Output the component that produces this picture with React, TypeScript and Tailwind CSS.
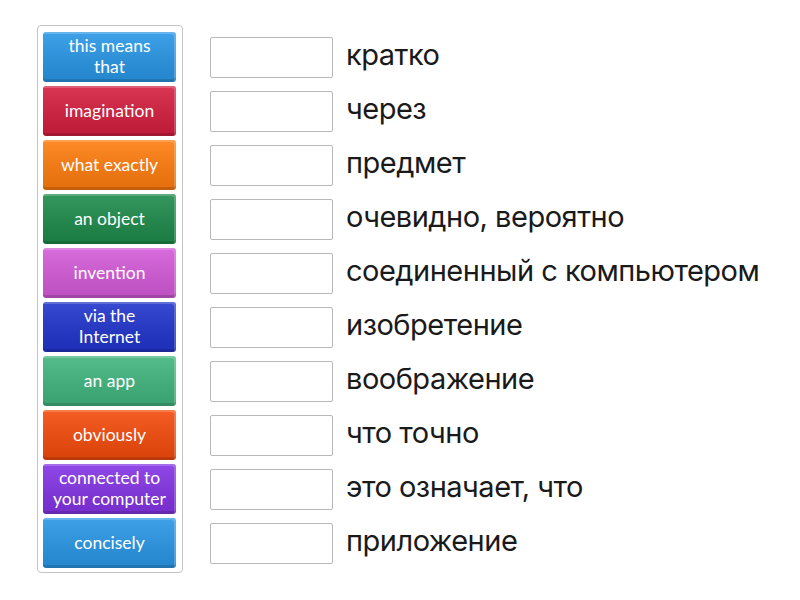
const tiles = [
  { lines: ['this means', 'that'], bg: 'bg-[#2a98e6]' },
  { lines: ['imagination'], bg: 'bg-[#d42040]' },
  { lines: ['what exactly'], bg: 'bg-[#ff7d10]' },
  { lines: ['an object'], bg: 'bg-[#1f8c4c]' },
  { lines: ['invention'], bg: 'bg-[#d45cd9]' },
  { lines: ['via the', 'Internet'], bg: 'bg-[#2236cc]' },
  { lines: ['an app'], bg: 'bg-[#42b67f]' },
  { lines: ['obviously'], bg: 'bg-[#f44c0c]' },
  { lines: ['connected to', 'your computer'], bg: 'bg-[#8434e4]' },
  { lines: ['concisely'], bg: 'bg-[#2a98e6]' },
];

const words = [
  'кратко',
  'через',
  'предмет',
  'очевидно, вероятно',
  'соединенный с компьютером',
  'изобретение',
  'воображение',
  'что точно',
  'это означает, что',
  'приложение',
];

export default function App() {
  return (
    <div className="flex min-h-[600px] w-[800px] bg-white pl-[37px] pt-[25px]">
      <div className="flex h-[548px] w-[146px] flex-col gap-[4px] rounded-[4px] border border-[#c4c4c4] pb-[4px] pl-[5px] pr-[6px] pt-[6px]">
        {tiles.map((t) => (
          <div
            key={t.lines.join(' ')}
            className={`flex h-[50px] w-[133px] flex-col items-center justify-center whitespace-nowrap rounded-[3px] pb-[2px] text-center text-[17.5px] text-white ${t.bg} bg-gradient-to-b from-white/10 to-black/10 shadow-[inset_0_-3px_0_rgba(0,0,0,0.15),inset_-2px_2px_0_rgba(255,255,255,0.2)]`}
            style={{ fontFamily: 'Lato, "Open Sans", sans-serif' }}
          >
            {t.lines.map((l) => (
              <span key={l} className="block leading-[21px]">
                {l}
              </span>
            ))}
          </div>
        ))}
      </div>
      <div className="ml-[27px] flex flex-col gap-[4px] pt-[7px]">
        {words.map((w) => (
          <div key={w} className="flex h-[50px] items-center gap-[13px]">
            <div className="h-[41px] w-[123px] rounded-[2px] border border-[#b8b8b8] bg-white" />
            <span
              className="mb-[6px] text-[29px] leading-none tracking-[-0.5px] text-[#1a1a1a]"
              style={{ fontFamily: 'Inter, Roboto, sans-serif' }}
            >
              {w}
            </span>
          </div>
        ))}
      </div>
    </div>
  );
}
